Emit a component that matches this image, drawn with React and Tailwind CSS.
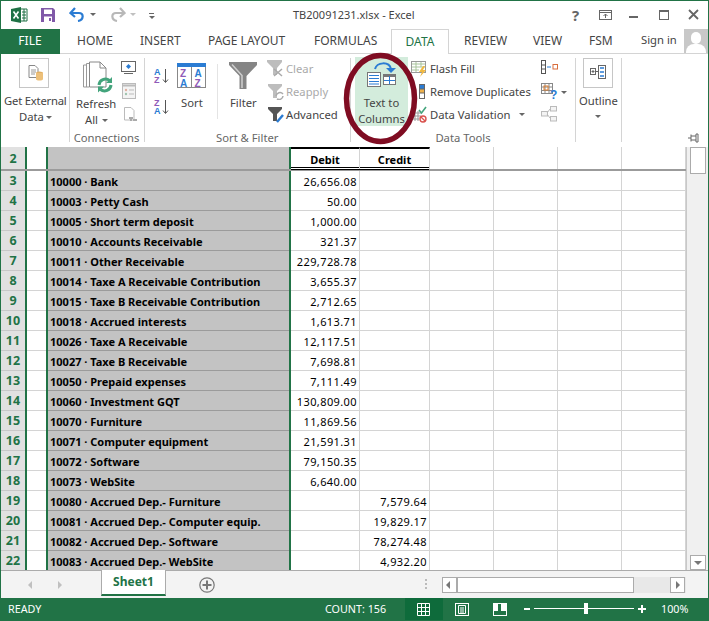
import React from 'react';

const rows = [
  [3, '10000 · Bank', '26,656.08', ''],
  [4, '10003 · Petty Cash', '50.00', ''],
  [5, '10005 · Short term deposit', '1,000.00', ''],
  [6, '10010 · Accounts Receivable', '321.37', ''],
  [7, '10011 · Other Receivable', '229,728.78', ''],
  [8, '10014 · Taxe A Receivable Contribution', '3,655.37', ''],
  [9, '10015 · Taxe B Receivable Contribution', '2,712.65', ''],
  [10, '10018 · Accrued interests', '1,613.71', ''],
  [11, '10026 · Taxe A Receivable', '12,117.51', ''],
  [12, '10027 · Taxe B Receivable', '7,698.81', ''],
  [13, '10050 · Prepaid expenses', '7,111.49', ''],
  [14, '10060 · Investment GQT', '130,809.00', ''],
  [15, '10070 · Furniture', '11,869.56', ''],
  [16, '10071 · Computer equipment', '21,591.31', ''],
  [17, '10072 · Software', '79,150.35', ''],
  [18, '10073 · WebSite', '6,640.00', ''],
  [19, '10080 · Accrued Dep.- Furniture', '', '7,579.64'],
  [20, '10081 · Accrued Dep.- Computer equip.', '', '19,829.17'],
  [21, '10082 · Accrued Dep.- Software', '', '78,274.48'],
  [22, '10083 · Accrued Dep.- WebSite', '', '4,932.20'],
];

const tabs = [
  ['HOME', 'left-[77px]'],
  ['INSERT', 'left-[140px]'],
  ['PAGE LAYOUT', 'left-[208px]'],
  ['FORMULAS', 'left-[314px]'],
  ['REVIEW', 'left-[464px]'],
  ['VIEW', 'left-[533px]'],
  ['FSM', 'left-[589px]'],
];

const blue = '#2b7cd3';
const purple = '#8f5bb8';

function Label({ className, children }) {
  return (
    <div className={`absolute text-[11.25px] leading-[16px] whitespace-nowrap text-[#444] ${className}`}>
      {children}
    </div>
  );
}

function Caret({ className }) {
  return <div className={`absolute w-0 h-0 border-x-[3px] border-x-transparent border-t-[3px] border-t-[#666] ${className}`} />;
}

function Sep({ className }) {
  return <div className={`absolute w-px bg-[#d4d4d4] ${className}`} />;
}

function Icon({ x, y, w, h, children }) {
  return (
    <svg className="absolute" style={{ left: x, top: y }} width={w} height={h} viewBox={`0 0 ${w} ${h}`} fill="none">
      {children}
    </svg>
  );
}

function TitleBar() {
  return (
    <div className="absolute left-0 top-0 w-[709px] h-[29px]">
      {/* excel logo */}
      <Icon x={11} y={7} w={17} h={16}>
        <path d="M0 2 L10 0 V16 L0 14 Z" fill="#1e7145" />
        <path d="M10 2 H16 V14 H10" fill="#fff" stroke="#1e7145" />
        <path d="M11 5 H15 M11 8 H15 M11 11 H15 M13 2 V14" stroke="#1e7145" />
        <path d="M2.5 4.5 L7.5 11.5 M7.5 4.5 L2.5 11.5" stroke="#fff" strokeWidth="1.6" />
      </Icon>
      {/* save */}
      <Icon x={41} y={8} w={14} h={14}>
        <path d="M0 0 H12 L14 2 V14 H0 Z" fill="#8059a8" />
        <rect x="3" y="1.5" width="8" height="4.5" fill="#fff" />
        <rect x="3" y="8.5" width="8" height="5.5" fill="#fff" />
        <rect x="8" y="10" width="2" height="3" fill="#8059a8" />
      </Icon>
      {/* undo */}
      <Icon x={69} y={7} w={16} h={15}>
        <path d="M2 6 H10 C15 6 15 13 9 14" stroke={blue} strokeWidth="2.2" />
        <path d="M6 1 L1.5 6 L6 10" stroke={blue} strokeWidth="2.2" />
      </Icon>
      <Caret className="left-[90px] top-[13px]" />
      {/* redo */}
      <Icon x={110} y={7} w={16} h={15}>
        <path d="M14 6 H6 C1 6 1 13 7 14" stroke="#b8b8b8" strokeWidth="2.2" />
        <path d="M10 1 L14.5 6 L10 10" stroke="#b8b8b8" strokeWidth="2.2" />
      </Icon>
      <div className="absolute left-[130px] top-[13px] w-0 h-0 border-x-[3px] border-x-transparent border-t-[3px] border-t-[#c0c0c0]" />
      {/* customize */}
      <div className="absolute left-[149px] top-[13px] w-[5px] h-px bg-[#666]" />
      <div className="absolute left-[149px] top-[16px] w-0 h-0 border-x-[3px] border-x-transparent border-t-[3px] border-t-[#666]" />

      <div className="absolute left-[293px] top-[7px] text-[11px] leading-[16px] text-[#444] whitespace-nowrap">TB20091231.xlsx - Excel</div>

      <div className="absolute left-[572px] top-[5px] text-[15px] leading-[20px] font-bold text-[#666]">?</div>
      <Icon x={599} y={10} w={13} h={11}>
        <rect x="0.5" y="0.5" width="12" height="9" stroke="#666" />
        <path d="M0 2.5 H13" stroke="#666" />
        <path d="M6.5 8 V4 M4.5 6 L6.5 4 L8.5 6" stroke="#666" />
      </Icon>
      <div className="absolute left-[629px] top-[16px] w-[9px] h-[2px] bg-[#666]" />
      <div className="absolute left-[659px] top-[10px] w-[10px] h-[10px] border border-[#666] border-t-2" />
      <Icon x={688} y={9} w={11} h={11}>
        <path d="M1 1 L10 10 M10 1 L1 10" stroke="#666" strokeWidth="1.8" />
      </Icon>
    </div>
  );
}

function TabBar() {
  return (
    <div className="absolute left-0 top-[29px] w-[709px] h-[25px] border-b border-[#d4d4d4]">
      <div className="absolute left-0 top-0 w-[60px] h-[25px] bg-[#217346] text-white text-[12px] leading-[24px] text-center">FILE</div>
      {tabs.map(([name, pos]) => (
        <div key={name} className={`absolute top-0 ${pos} text-[12px] leading-[24px] text-[#444] whitespace-nowrap`}>{name}</div>
      ))}
      <div className="absolute left-[391px] top-0 w-[58px] h-[25px] bg-white border border-b-0 border-[#d4d4d4] text-[#217346] text-[12px] leading-[24px] text-center">DATA</div>
      <div className="absolute left-[641px] top-0 text-[11.25px] leading-[22px] text-[#444]">Sign in</div>
      <div className="absolute left-[684px] top-0 w-[24px] h-[24px] bg-[#c8c8c8] overflow-hidden">
        <div className="absolute left-[7px] top-[3px] w-[10px] h-[12px] rounded-full bg-white" />
        <div className="absolute left-[2px] top-[15px] w-[20px] h-[12px] rounded-t-[8px] bg-white" />
      </div>
    </div>
  );
}

function Ribbon() {
  return (
    <div className="absolute left-0 top-0 w-[709px] h-[147px]">
      {/* Get External Data */}
      <div className="absolute left-[19px] top-[58px] w-[30px] h-[30px] border border-[#c6c6c6]" />
      <Icon x={28} y={65} w={16} h={16}>
        <path d="M1 .5 H7 L10 3.5 V12.5 H1 Z" fill="#fff" stroke="#888" />
        <path d="M3 5 H8 M3 7 H8 M3 9 H7" stroke="#999" />
        <ellipse cx="11.5" cy="8" rx="3.5" ry="1.6" fill="#e3b063" />
        <path d="M8 8 V14 C8 16 15 16 15 14 V8 Z" fill="#edc07a" />
      </Icon>
      <Label className="left-[4px] top-[93px] tracking-[-0.2px]">Get External</Label>
      <Label className="left-[19px] top-[109px]">Data</Label>
      <Caret className="left-[46px] top-[116px]" />
      <Sep className="left-[69px] top-[58px] h-[84px]" />

      {/* Refresh All */}
      <Icon x={83} y={61} w={30} h={32}>
        <path d="M.5 4 V26 M3.5 2.5 V26 M.5 4 H4 M3.5 2.5 H7 M.5 26 H6" stroke="#999" />
        <path d="M6.5 1 H17 L23 7 V26 H6.5 Z" fill="#fff" stroke="#888" />
        <path d="M17 1 V7 H23" stroke="#888" />
        <path d="M16 24 A6.5 6.5 0 0 1 26.5 19.5" stroke="#43a47c" strokeWidth="3" />
        <path d="M28 24 A6.5 6.5 0 0 1 17.5 28.5" stroke="#43a47c" strokeWidth="3" />
        <path d="M29 16 V22 H23 Z M15 31.5 V25.5 H21 Z" fill="#43a47c" />
      </Icon>
      <Label className="left-[76px] top-[96px]">Refresh</Label>
      <Label className="left-[85px] top-[112px]">All</Label>
      <Caret className="left-[102px] top-[119px]" />
      <Icon x={121} y={61} w={16} h={14}>
        <rect x=".5" y=".5" width="14" height="10" fill="#fff" stroke="#666" />
        <path d="M3 12.5 H12" stroke="#666" />
        <path d="M7.5 3 L10 5.5 L7.5 8 L5 5.5 Z" fill="#2b7cd3" />
      </Icon>
      <Icon x={122} y={83} w={15} h={16}>
        <rect x=".5" y=".5" width="13" height="15" fill="#f4f4f4" stroke="#bbb" />
        <path d="M1 2.5 H13" stroke="#bbb" strokeWidth="2" />
        <path d="M7 7 H12 M7 11 H12" stroke="#bbb" />
        <circle cx="4" cy="7" r="1.2" fill="#e0b0a0" />
        <circle cx="4" cy="11" r="1.2" fill="#a0c4b0" />
      </Icon>
      <Icon x={124} y={107} w={14} h={16}>
        <path d="M.5 .5 H7 L10 3.5 V13 H.5 Z" fill="#fff" stroke="#bbb" />
        <path d="M5 11 H9 M9 13 H13 M6 13 H8" stroke="#aaa" strokeWidth="2" />
      </Icon>
      <div className="absolute left-[66px] top-[130px] w-[81px] text-center text-[11.25px] leading-[16px] text-[#666]">Connections</div>
      <Sep className="left-[144px] top-[58px] h-[84px]" />

      {/* Sort */}
      <Icon x={153} y={67} w={16} h={17}>
        <text x="1" y="7.5" fontSize="9" fontWeight="700" fontFamily="Liberation Sans" fill={blue}>A</text>
        <text x="1" y="16" fontSize="9" fontWeight="700" fontFamily="Liberation Sans" fill={purple}>Z</text>
        <path d="M12.5 2 V15 M10 12.5 L12.5 15.5 L15 12.5" stroke="#555" />
      </Icon>
      <Icon x={153} y={98} w={16} h={17}>
        <text x="1" y="7.5" fontSize="9" fontWeight="700" fontFamily="Liberation Sans" fill={purple}>Z</text>
        <text x="1" y="16" fontSize="9" fontWeight="700" fontFamily="Liberation Sans" fill={blue}>A</text>
        <path d="M12.5 2 V15 M10 12.5 L12.5 15.5 L15 12.5" stroke="#555" />
      </Icon>
      <Icon x={177} y={63} w={30} h={26}>
        <rect x=".5" y=".5" width="28" height="24" fill="#fff" stroke="#888" />
        <rect x="0" y="0" width="29" height="4" fill={blue} />
        <path d="M14.5 4 V25" stroke="#888" />
        <text x="3" y="14" fontSize="10" fontWeight="700" fontFamily="Liberation Sans" fill={purple}>Z</text>
        <text x="3" y="23.5" fontSize="10" fontWeight="700" fontFamily="Liberation Sans" fill={blue}>A</text>
        <text x="17.5" y="14" fontSize="10" fontWeight="700" fontFamily="Liberation Sans" fill={blue}>A</text>
        <text x="17.5" y="23.5" fontSize="10" fontWeight="700" fontFamily="Liberation Sans" fill={purple}>Z</text>
      </Icon>
      <Label className="left-[181px] top-[95px]">Sort</Label>
      <Sep className="left-[217px] top-[64px] h-[55px] bg-[#e4e4e4]" />

      {/* Filter */}
      <Icon x={229} y={62} w={28} h={28}>
        <path d="M0 0 H28 V3 L17.5 14 V27 H10.5 V14 L0 3 Z" fill="#858585" />
        <path d="M3 2.5 L13 13.5 V26" stroke="#cfcfcf" strokeWidth="1.5" />
      </Icon>
      <Label className="left-[230px] top-[95px]">Filter</Label>
      <Icon x={267} y={60} w={17} h={17}>
        <path d="M0 0 H15 V2 L10 8 V15 H6 V8 L0 2 Z" fill="#bdbdbd" />
        <path d="M7 9 L15 16 M15 9 L7 16" stroke="#aaa" strokeWidth="1.5" />
      </Icon>
      <Label className="left-[286px] top-[61px] !text-[#aaa]">Clear</Label>
      <Icon x={268} y={84} w={17} h={16}>
        <path d="M0 0 H14 V2 L9 7 V14 H5 V7 L0 2 Z" fill="#bdbdbd" />
        <path d="M8 12 A4 4 0 0 1 15 10 M15 12 A4 4 0 0 1 9 15" stroke="#aaa" strokeWidth="1.5" />
      </Icon>
      <Label className="left-[286px] top-[84px] !text-[#aaa]">Reapply</Label>
      <Icon x={268} y={107} w={17} h={16}>
        <path d="M0 0 H14 V2 L9 7 V14 H5 V7 L0 2 Z" fill="#555" />
        <path d="M9 15 L15 8" stroke="#2b7cd3" strokeWidth="2.4" />
      </Icon>
      <Label className="left-[286px] top-[107px]">Advanced</Label>
      <div className="absolute left-[216px] top-[130px] text-[11.25px] leading-[16px] text-[#666] whitespace-nowrap">Sort &amp; Filter</div>
      <Sep className="left-[350px] top-[58px] h-[84px]" />

      {/* Text to Columns */}
      <div className="absolute left-[355px] top-[57px] w-[53px] h-[69px] bg-[#d3ecdc]" />
      <Icon x={365} y={62} w={33} h={26}>
        <path d="M10 7 C12 0 24 -1 26 7" stroke="#2b7cd3" strokeWidth="2" />
        <path d="M21 6 L26 11 L31 6 Z" fill="#2b7cd3" />
        <rect x="2.5" y="10.5" width="13" height="14" fill="#fff" stroke="#777" />
        <path d="M4 13.5 H14 M4 16.5 H14 M4 19.5 H14 M4 22 H14" stroke="#2b7cd3" />
        <rect x="18.5" y="12.5" width="12" height="10" fill="#fff" stroke="#777" />
        <path d="M19 14 H30" stroke="#777" strokeWidth="2" />
        <path d="M24.5 14 V22 M19 18.5 H30" stroke="#2b7cd3" />
      </Icon>
      <div className="absolute left-[355px] top-[95px] w-[53px] text-center text-[11.25px] leading-[16px] text-[#444]">Text to<br />Columns</div>

      {/* Data tools */}
      <Icon x={411} y={61} w={16} h={16}>
        <rect x=".5" y=".5" width="14" height="11" fill="#fff" stroke="#999" />
        <path d="M1 3 H14 M1 6 H14 M1 9 H8 M5 1 V11 M10 1 V6" stroke="#a9c49c" />
        <path d="M12 5 L8 11 H11 L9 16 L15 9 H12 L14 5 Z" fill="#f0b840" />
      </Icon>
      <Label className="left-[430px] top-[61px]">Flash Fill</Label>
      <Icon x={411} y={84} w={16} h={15}>
        <path d="M1 8 H5 M3 6 L5 8 L3 10" stroke="#2b7cd3" />
        <rect x="8.5" y=".5" width="5" height="14" fill="#fff" stroke="#666" />
        <rect x="9" y="1" width="4" height="4" fill="#2b7cd3" />
        <rect x="9" y="5" width="4" height="4" fill="#efb14a" />
        <path d="M8 5 H14 M8 9 H14" stroke="#666" />
      </Icon>
      <Label className="left-[430px] top-[84px]">Remove Duplicates</Label>
      <Icon x={413} y={106} w={14} h={17}>
        <path d="M0 7 H8 M0 10 H8 M0 13 H6 M2 5 V15 M5 5 V15" stroke="#999" />
        <path d="M6 4 L8.5 7 L13 1" stroke="#43a47c" strokeWidth="1.6" />
        <circle cx="10" cy="13" r="3" fill="#fff" stroke="#d9534f" strokeWidth="1.4" />
        <path d="M8 11 L12 15" stroke="#d9534f" strokeWidth="1.2" />
      </Icon>
      <Label className="left-[430px] top-[107px]">Data Validation</Label>
      <Caret className="left-[519px] top-[113px]" />
      <Icon x={541} y={60} w={18} h={15}>
        <rect x=".5" y=".5" width="4" height="13" fill="#fff" stroke="#555" />
        <path d="M0 5 H5 M0 9 H5" stroke="#555" />
        <path d="M6 7 H10" stroke="#2b7cd3" />
        <rect x="12" y="4.5" width="4.5" height="4.5" stroke="#d86d3c" />
      </Icon>
      <Icon x={541} y={83} w={20} h={20}>
        <rect x=".5" y=".5" width="11" height="10" fill="#fff" stroke="#888" />
        <path d="M1 4 H11 M1 7.5 H11 M4 1 V10 M8 1 V10" stroke="#888" />
        <rect x="3" y="3" width="4" height="4" stroke="#e08030" />
        <text x="9" y="16" fontSize="12" fontWeight="700" fontFamily="Liberation Sans" fill="#2b7cd3">?</text>
      </Icon>
      <Caret className="left-[561px] top-[91px]" />
      <Icon x={541} y={106} w={17} h={16}>
        <rect x="9.5" y=".5" width="6" height="4.5" fill="#f4f4f4" stroke="#bbb" />
        <rect x=".5" y="5.5" width="6" height="4.5" fill="#f4f4f4" stroke="#bbb" />
        <rect x="9.5" y="10.5" width="6" height="4.5" fill="#f4f4f4" stroke="#bbb" />
        <path d="M6 7 L9 3 M6 8 L9 12" stroke="#bbb" />
      </Icon>
      <div className="absolute left-[340px] top-[130px] w-[246px] text-center text-[11.25px] leading-[16px] text-[#666]">Data Tools</div>
      <Sep className="left-[575px] top-[58px] h-[84px]" />

      {/* Outline */}
      <div className="absolute left-[583px] top-[58px] w-[30px] h-[30px] border border-[#c6c6c6]" />
      <Icon x={590} y={65} w={17} h={15}>
        <rect x=".5" y="3.5" width="5" height="6" fill="#fff" stroke="#666" />
        <path d="M1.5 6.5 H4.5 M3 5 V8" stroke="#666" />
        <path d="M5.5 6.5 H8" stroke="#666" />
        <rect x="8.5" y=".5" width="7" height="13" fill="#fff" stroke="#666" />
        <path d="M10 3 H14 M10 7 H14 M10 11 H14" stroke="#2b7cd3" strokeWidth="1.5" />
      </Icon>
      <Label className="left-[579px] top-[93px]">Outline</Label>
      <Caret className="left-[595px] top-[115px]" />
      <Sep className="left-[621px] top-[58px] h-[84px]" />
      <Icon x={688} y={133} w={11} h={10}>
        <path d="M0 5 H3 M3 1.5 V8.5 M3 3 H8 M3 7 H8 M8 1 V9 H10 V1 Z" stroke="#666" />
      </Icon>
    </div>
  );
}

function Sheet() {
  return (
    <div className="absolute left-[1px] top-[147px] w-[707px] h-[423px] [font-family:'Liberation_Sans',Arial,sans-serif] text-[11px] text-black bg-white overflow-hidden">
      <div className="flex h-[24px] border-b-2 border-[#9b9b9b]">
        <div className="w-[24px] bg-[#e1e1e1] text-[#217346] text-[12.5px] [font-family:'Open_Sans',sans-serif] font-bold text-center leading-[23px]">2</div>
        <div className="w-[2px] bg-[#217346]" />
        <div className="w-[19px]" />
        <div className="w-[2px] bg-[#217346]" />
        <div className="w-[241px] bg-[#c3c3c3]" />
        <div className="w-[2px] bg-[#217346]" />
        <div className="w-[69px] border-t-2 border-black border-r border-r-[#d4d4d4] relative">
          <div className="absolute left-0 right-0 top-[4px] text-center font-bold leading-[14px]">Debit</div>
          <div className="absolute left-0 right-0 bottom-[1px] h-px bg-black" />
          <div className="absolute left-0 right-[-1px] bottom-[-1px] h-px bg-black" />
        </div>
        <div className="w-[70px] border-t-2 border-black border-r border-r-[#d4d4d4] relative">
          <div className="absolute left-0 right-0 top-[4px] text-center font-bold leading-[14px]">Credit</div>
          <div className="absolute left-0 right-0 bottom-[1px] h-px bg-black" />
          <div className="absolute left-0 right-0 bottom-[-1px] h-px bg-black" />
        </div>
        <div className="w-[64px] border-r border-[#d4d4d4]" />
        <div className="w-[64px] border-r border-[#d4d4d4]" />
        <div className="w-[64px] border-r border-[#d4d4d4]" />
        <div className="w-[64px] border-r border-[#d4d4d4]" />
      </div>
      {rows.map(([num, name, debit, credit]) => (
        <div key={num} className="flex h-[20px]">
          <div className="w-[24px] bg-[#e1e1e1] text-[#217346] text-[12.5px] [font-family:'Open_Sans',sans-serif] font-bold text-center leading-[19px] border-b border-[#c8c8c8]">{num}</div>
          <div className="w-[2px] bg-[#217346]" />
          <div className="w-[19px] border-b border-[#d4d4d4]" />
          <div className="w-[2px] bg-[#217346]" />
          <div className="w-[241px] bg-[#c3c3c3] border-b border-[#9b9b9b] font-bold pl-[2px] leading-[22px] whitespace-nowrap">{name}</div>
          <div className="w-[2px] bg-[#217346]" />
          <div className="w-[69px] border-b border-r border-[#d4d4d4] text-right pr-[2px] leading-[22px] tracking-[0.4px]">{debit}</div>
          <div className="w-[70px] border-b border-r border-[#d4d4d4] text-right pr-[2px] leading-[22px] tracking-[0.4px]">{credit}</div>
          <div className="w-[64px] border-b border-r border-[#d4d4d4]" />
          <div className="w-[64px] border-b border-r border-[#d4d4d4]" />
          <div className="w-[64px] border-b border-r border-[#d4d4d4]" />
          <div className="w-[64px] border-b border-r border-[#d4d4d4]" />
        </div>
      ))}
      {/* vertical scrollbar */}
      <div className="absolute left-[685px] top-0 w-[22px] h-[423px] bg-[#f0f0f0] border-l border-[#c8c8c8]">
        <div className="absolute left-[3px] top-0 w-[16px] h-[27px] bg-white border border-[#ababab]" />
        <div className="absolute left-[3px] top-[408px] w-[16px] h-[15px] bg-white border border-[#ababab]">
          <div className="absolute left-[3px] top-[5px] w-0 h-0 border-x-[4px] border-x-transparent border-t-[4px] border-t-[#777]" />
        </div>
      </div>
    </div>
  );
}

function SheetTabs() {
  return (
    <div className="absolute left-[1px] top-[570px] w-[707px] h-[28px] bg-[#f3f3f3] border-t border-[#ababab]">
      <div className="absolute left-[27px] top-[10px] w-0 h-0 border-y-[4px] border-y-transparent border-r-[4px] border-r-[#c0c0c0]" />
      <div className="absolute left-[57px] top-[10px] w-0 h-0 border-y-[4px] border-y-transparent border-l-[4px] border-l-[#c0c0c0]" />
      <div className="absolute left-[100px] top-[-1px] w-[65px] h-[26px] bg-white border-x border-[#ababab] border-b-2 border-b-[#217346] text-center text-[#217346] font-bold text-[12px] leading-[24px]">Sheet1</div>
      <svg className="absolute left-[198px] top-[6px]" width="16" height="16" viewBox="0 0 16 16" fill="none">
        <circle cx="8" cy="8" r="7.2" stroke="#777" strokeWidth="1.2" />
        <path d="M8 3.5 V12.5 M3.5 8 H12.5" stroke="#777" strokeWidth="2" />
      </svg>
      <div className="absolute left-[424px] top-[8px] w-[2px] h-[2px] bg-[#bbb]" />
      <div className="absolute left-[424px] top-[12px] w-[2px] h-[2px] bg-[#bbb]" />
      <div className="absolute left-[424px] top-[16px] w-[2px] h-[2px] bg-[#bbb]" />
      <div className="absolute left-[441px] top-[6px] w-[244px] h-[16px] bg-[#e8e8e8]">
        <div className="absolute left-0 top-0 w-[15px] h-[16px] bg-white border border-[#ababab]">
          <div className="absolute left-[3px] top-[3px] w-0 h-0 border-y-[4px] border-y-transparent border-r-[4px] border-r-[#777]" />
        </div>
        <div className="absolute left-[15px] top-0 w-[177px] h-[16px] bg-white border border-[#ababab]" />
        <div className="absolute left-[228px] top-0 w-[15px] h-[16px] bg-white border border-[#ababab]">
          <div className="absolute left-[5px] top-[3px] w-0 h-0 border-y-[4px] border-y-transparent border-l-[4px] border-l-[#777]" />
        </div>
      </div>
    </div>
  );
}

function StatusBar() {
  return (
    <div className="absolute left-0 top-[598px] w-[709px] h-[23px] bg-[#217346] text-white text-[10.75px] leading-[22px]">
      <div className="absolute left-[8px] top-0">READY</div>
      <div className="absolute left-[325px] top-0">COUNT: 156</div>
      <div className="absolute left-[405px] top-0 w-[38px] h-[22px] bg-[#0e6b3b]" />
      <svg className="absolute left-[417px] top-[5px]" width="14" height="13" viewBox="0 0 14 13" fill="none">
        <path d="M.5 .5 H12.5 V12.5 H.5 Z M.5 4.5 H12.5 M.5 8.5 H12.5 M4.5 .5 V12.5 M8.5 .5 V12.5" stroke="#fff" />
      </svg>
      <svg className="absolute left-[455px] top-[5px]" width="14" height="13" viewBox="0 0 14 13" fill="none">
        <rect x=".5" y=".5" width="13" height="12" stroke="#fff" />
        <path d="M3.5 2.5 H10.5 V10.5 H3.5 Z M5 5 H9 M5 7 H9 M5 9 H9" stroke="#fff" />
      </svg>
      <svg className="absolute left-[493px] top-[5px]" width="14" height="13" viewBox="0 0 14 13" fill="none">
        <rect x=".5" y=".5" width="13" height="12" stroke="#fff" />
        <path d="M1 1 H5 V8 H1 Z M8 1 H13 V8 H8 Z" fill="#fff" />
      </svg>
      <div className="absolute left-[524px] top-[10px] w-[6px] h-[2px] bg-white" />
      <div className="absolute left-[534px] top-[10px] w-[100px] h-px bg-white" />
      <div className="absolute left-[584px] top-[5px] w-[4px] h-[11px] bg-white" />
      <div className="absolute left-[638px] top-[10px] w-[8px] h-[2px] bg-white" />
      <div className="absolute left-[641px] top-[7px] w-[2px] h-[8px] bg-white" />
      <div className="absolute left-[661px] top-0">100%</div>
    </div>
  );
}

export default function App() {
  return (
    <div className="relative w-[709px] h-[621px] bg-white overflow-hidden [font-family:'Open_Sans','Noto_Sans',sans-serif]">
      <TitleBar />
      <TabBar />
      <Ribbon />
      <Sheet />
      <SheetTabs />
      <StatusBar />
      {/* hand drawn circle around Text to Columns */}
      <svg className="absolute left-[340px] top-[50px]" width="82" height="98" viewBox="0 0 82 98" fill="none">
        <ellipse cx="40.5" cy="48.5" rx="34" ry="43" stroke="#7f0c22" strokeWidth="5.5" />
      </svg>
      {/* window edge */}
      <div className="absolute inset-0 border border-b-0 border-[#217346] pointer-events-none" />
    </div>
  );
}
